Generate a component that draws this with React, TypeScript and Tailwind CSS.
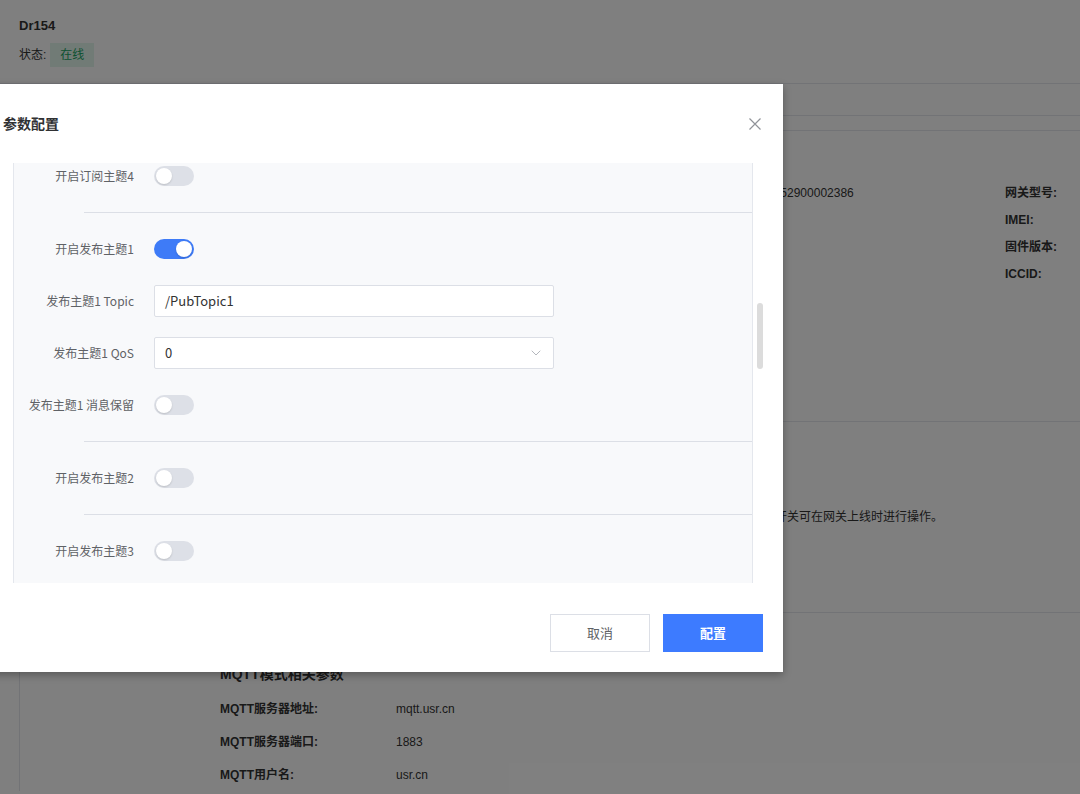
import { ReactNode } from "react";
import { ChevronDown } from "lucide-react";
import clsx from "clsx";

function Switch({ on = false }: { on?: boolean }) {
  return (
    <span
      className={clsx(
        "inline-flex h-5 w-10 items-center rounded-full",
        on ? "bg-[#3e7bf7]" : "bg-[#dde0e7]"
      )}
    >
      <span
        className={clsx(
          "h-4 w-4 rounded-full bg-white shadow-[0_1px_2px_rgba(0,0,0,0.15)]",
          on ? "ml-[22px]" : "ml-[2px]"
        )}
      />
    </span>
  );
}

function FormRow({ label, children }: { label: string; children: ReactNode }) {
  return (
    <div className="flex h-8 items-center">
      <label className="w-[120px] shrink-0 text-right text-[12px] text-[#5f6266]">{label}</label>
      <div className="ml-5 flex items-center">{children}</div>
    </div>
  );
}

function Divider() {
  return <div className="my-5 ml-[70px] border-t border-[#dcdfe6]" />;
}

function InfoRow({ label, value }: { label: string; value?: string }) {
  return (
    <div className="flex h-[33px] items-center text-[12px] text-[#333]">
      <span className="w-[176px] font-bold">{label}</span>
      <span>{value}</span>
    </div>
  );
}

export default function App() {
  return (
    <div className="relative h-[794px] w-full overflow-hidden bg-white font-['Liberation_Sans','Noto_Sans_CJK_SC',sans-serif] text-[#333]">
      {/* page under the dialog */}
      <header className="h-[84px] border-b border-[#e4e7ed] px-[19px] pt-[18px]">
        <div className="text-[13px] font-bold leading-4">Dr154</div>
        <div className="mt-[9px] flex items-center text-[12px]">
          <span>状态:</span>
          <span className="ml-1 flex h-6 w-11 items-center justify-center bg-[#e3f6ec] text-[#19a463]">在线</span>
        </div>
      </header>

      <main className="ml-[19px] border-l border-[#e4e7ed]">
        <div className="h-[31px]" />
        <div className="h-4 border-y border-[#e4e7ed]" />

        <section className="h-[291px] border-b border-[#e4e7ed] pl-[200px] pt-12 text-[12px]">
          <div className="flex">
            <div className="w-[380px]">
              {["设备名称:", "设备类型:", "所属分组:", "创建时间:"].map((l) => (
                <div key={l} className="flex h-[27px] items-center">
                  <span className="w-[176px] font-bold">{l}</span>
                </div>
              ))}
            </div>
            <div className="w-[405px]">
              <div className="flex h-[27px] items-center">
                <span className="w-[167px] font-bold">SN:</span>
                <span>0052900002386</span>
              </div>
              <div className="h-[27px]" />
            </div>
            <div className="whitespace-nowrap">
              {["网关型号:", "IMEI:", "固件版本:", "ICCID:"].map((l) => (
                <div key={l} className="flex h-[27px] items-center font-bold">
                  {l}
                </div>
              ))}
            </div>
          </div>
        </section>

        <section className="h-[191px] border-b border-[#e4e7ed] pl-[200px] pt-[85px] text-[12px]">
          <div className="flex h-5 items-center whitespace-nowrap">
            <span className="w-[183px] font-bold">远程控制:</span>
            <span>设备支持远程重启、恢复出厂设置、远程升级固件与参数下发等，以上开关可在网关上线时进行操作。</span>
          </div>
        </section>

        <section className="pl-[200px] pt-[51px]">
          <div className="text-[14px] font-bold leading-5">MQTT模式相关参数</div>
          <div className="mt-2">
            <InfoRow label="MQTT服务器地址:" value="mqtt.usr.cn" />
            <InfoRow label="MQTT服务器端口:" value="1883" />
            <InfoRow label="MQTT用户名:" value="usr.cn" />
          </div>
        </section>
      </main>

      {/* mask */}
      <div className="absolute inset-0 bg-black/50" />

      {/* dialog */}
      <div className="absolute left-[-17px] top-[84px] w-[800px] bg-white font-['Noto_Sans_CJK_SC','Noto_Sans',sans-serif] shadow-[0_3px_8px_rgba(0,0,0,0.3)]">
        <div className="flex h-[79px] items-center justify-between pl-5 pr-[22px]">
          <span className="text-[14px] font-semibold text-[#303133]">参数配置</span>
          <svg width="12" height="12" viewBox="0 0 12 12" className="text-[#909399]">
            <path d="M0.5 0.5 11.5 11.5M11.5 0.5 0.5 11.5" stroke="currentColor" strokeWidth="1.2" />
          </svg>
        </div>

        <div className="ml-[30px] flex h-[420px] w-[752px]">
          <div className="w-[740px] overflow-hidden border-x border-[#e4e7ed] bg-[#f8f9fb]">
            <div className="-mt-[3px]">
              <FormRow label="开启订阅主题4">
                <Switch />
              </FormRow>
              <Divider />
              <div className="flex flex-col gap-5">
                <FormRow label="开启发布主题1">
                  <Switch on />
                </FormRow>
                <FormRow label="发布主题1 Topic">
                  <div className="flex h-8 w-[400px] items-center rounded-[2px] border border-[#dcdfe6] bg-white px-[10px] text-[13px] text-[#333]">
                    /PubTopic1
                  </div>
                </FormRow>
                <FormRow label="发布主题1 QoS">
                  <div className="flex h-8 w-[400px] items-center justify-between rounded-[2px] border border-[#dcdfe6] bg-white pl-[10px] pr-[9px] text-[13px] text-[#333]">
                    <span>0</span>
                    <ChevronDown size={16} strokeWidth={1.3} className="text-[#a8abb2]" />
                  </div>
                </FormRow>
                <FormRow label="发布主题1 消息保留">
                  <Switch />
                </FormRow>
              </div>
              <Divider />
              <FormRow label="开启发布主题2">
                <Switch />
              </FormRow>
              <Divider />
              <FormRow label="开启发布主题3">
                <Switch />
              </FormRow>
            </div>
          </div>
          <div className="w-3">
            <div className="ml-1 mt-[140px] h-[66px] w-[6px] rounded-full bg-[#dcdcdc]" />
          </div>
        </div>

        <div className="flex justify-end gap-[13px] pb-5 pr-5 pt-[31px]">
          <button className="h-[38px] w-[100px] border border-[#dcdfe6] bg-white text-[13px] text-[#606266]">取消</button>
          <button className="h-[38px] w-[100px] bg-[#3d7bff] text-[13px] font-semibold text-white">配置</button>
        </div>
      </div>
    </div>
  );
}
